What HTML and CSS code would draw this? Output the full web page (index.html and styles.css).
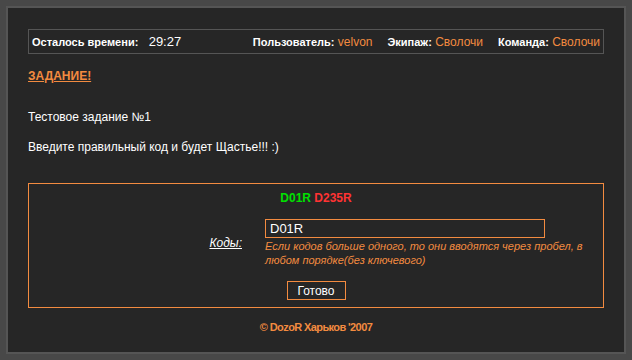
FILE: index.html
```html
<!DOCTYPE html>
<html lang="ru">
<head>
    <meta charset="UTF-8">
    <title>DozoR</title>
    <link rel="stylesheet" href="styles.css">
</head>
<body>
    <div class="page">
        <div class="status">
            <div class="timer">
                <span class="label">Осталось времени:</span>
                <span class="time">29:27</span>
            </div>
            <div class="info">
                <span><span class="label">Пользователь:</span> <span class="value">velvon</span></span>
                <span><span class="label">Экипаж:</span> <span class="value">Сволочи</span></span>
                <span><span class="label">Команда:</span> <span class="value">Сволочи</span></span>
            </div>
        </div>

        <a class="task-title" href="#">ЗАДАНИЕ!</a>

        <p class="task-text">Тестовое задание №1</p>
        <p class="task-text">Введите правильный код и будет Щастье!!! :)</p>

        <form class="codes">
            <div class="results">
                <span class="ok">D01R</span>
                <span class="bad">D235R</span>
            </div>
            <div class="row">
                <label for="code" class="code-label">Коды:</label>
                <div class="field">
                    <input type="text" id="code" name="code" value="D01R">
                    <div class="hint">Если кодов больше одного, то они вводятся через пробел, в любом порядке(без ключевого)</div>
                </div>
            </div>
            <div class="submit">
                <input type="button" value="Готово">
            </div>
        </form>

        <div class="footer">© DozoR Харьков '2007</div>
    </div>
</body>
</html>
```

FILE: styles.css
```css
*{
    box-sizing: border-box;
    font-family: "Liberation Sans", Arial, sans-serif;
}

html, body{
    margin: 0;
    background-color: #484848;
}

body{
    padding: 6px;
}

.page{
    width: 620px;
    height: 348px;
    border: 2px solid #555555;
    background-color: #262626;
    padding: 21px 20px 0 20px;
    color: #ffffff;
    font-size: 12px;
}

.status{
    height: 25px;
    border: 1px solid #555555;
    display: flex;
    justify-content: space-between;
    align-items: center;
    padding: 0 3px;
}

.status .label{
    font-weight: bold;
    font-size: 11px;
}

.status .time{
    font-size: 13px;
    margin-left: 7px;
}

.status .info{
    display: flex;
    gap: 15px;
}

.status .value{
    color: #f38b40;
    font-size: 12px;
}

.task-title{
    display: inline-block;
    margin-top: 15px;
    color: #f38b40;
    font-weight: bold;
    font-size: 12px;
}

.task-text{
    margin: 0;
    margin-top: 16px;
    font-size: 12px;
    line-height: 14px;
}

.task-text:first-of-type{
    margin-top: 27px;
}

.codes{
    margin-top: 29px;
    height: 125px;
    border: 1px solid #f38b40;
    padding-top: 6px;
}

.results{
    text-align: center;
    font-weight: bold;
    font-size: 12px;
    line-height: 16px;
}

.results .ok{
    color: #00e000;
}

.results .bad{
    color: #ff3333;
}

.row{
    display: grid;
    grid-template-columns: 213px 330px;
    column-gap: 23px;
    align-items: center;
    margin-top: 13px;
}

.code-label{
    text-align: right;
    font-style: italic;
    text-decoration: underline;
    font-size: 12px;
}

.field input{
    display: block;
    appearance: none;
    outline: none;
    width: 280px;
    height: 19px;
    border: 1px solid #f38b40;
    background-color: #262626;
    color: #ffffff;
    font-size: 13px;
    padding: 0 4px;
}

.hint{
    color: #f38b40;
    font-style: italic;
    font-size: 11px;
    line-height: 14px;
    margin-top: 1px;
}

.submit{
    text-align: center;
    margin-top: 14px;
}

.submit input{
    appearance: none;
    width: 59px;
    height: 19px;
    border: 1px solid #f38b40;
    background-color: #262626;
    color: #ffffff;
    font-size: 12px;
    padding: 0;
}

.footer{
    text-align: center;
    color: #f38b40;
    font-weight: bold;
    font-size: 11px;
    letter-spacing: -0.6px;
    margin-top: 13px;
}
```
